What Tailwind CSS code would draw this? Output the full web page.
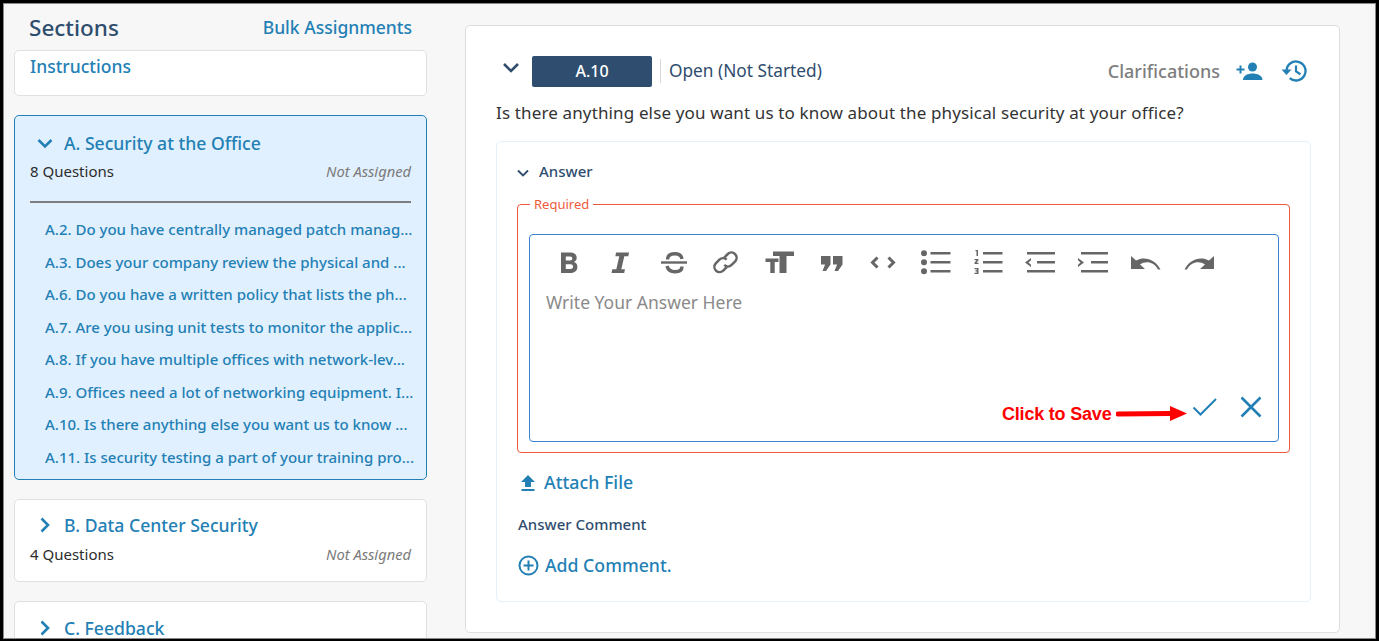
<!DOCTYPE html>
<html>
<head>
<meta charset="utf-8">
<script src="https://cdn.jsdelivr.net/npm/@tailwindcss/browser@4"></script>
</head>
<body class="m-0 bg-black">
<div class="w-[1379px] h-[641px] overflow-hidden bg-black pt-[3px] pl-[3px] pb-[2px] pr-[3px] font-['Noto_Sans',sans-serif]">
<div class="h-full w-full overflow-hidden bg-[#f7f7f7] border border-[#8a8a8a] flex items-start">

  <!-- sidebar -->
  <aside class="w-[423px] ml-[10px] shrink-0 flex flex-col">
    <div class="h-[46px] flex items-start justify-between pl-[15px] pr-[25px]">
      <h2 class="text-[22.5px] leading-[30px] mt-[9px] font-medium text-[#2f4d6e]">Sections</h2>
      <a class="text-[17.5px] leading-[24px] mt-[11px] font-medium text-[#2380b5]">Bulk Assignments</a>
    </div>
    <div class="flex flex-col gap-[19px] w-[413px]">
      <div class="h-[46px] bg-white border border-[#e0e0e0] rounded-[5px] px-[15px] pt-[2px]">
        <a class="block text-[17.5px] leading-[26px] font-medium text-[#2380b5]">Instructions</a>
      </div>

      <div class="h-[365px] bg-[#e1f0fe] border border-[#2380b5] rounded-[5px] px-[15px] pt-[13px]">
        <div class="flex items-center h-[28px] pl-[7px] gap-[11px]">
          <svg class="w-[16px] h-[16px]" viewBox="0 0 16 16" fill="none" stroke="#2380b5" stroke-width="2.6"><path d="M1.5 5l6.5 6.5L14.500 5"/></svg>
          <span class="text-[17.6px] leading-[28px] font-medium text-[#2380b5]">A. Security at the Office</span>
        </div>
        <div class="flex items-center justify-between h-[22px] mt-[3px]">
          <span class="text-[15px] text-[#2c2c2c]">8 Questions</span>
          <span class="text-[14.7px] italic text-[#7b7b7b]">Not Assigned</span>
        </div>
        <div class="h-[2px] bg-[#7d7d7d] mt-[19px]"></div>
        <ul class="mt-[10px] pl-[15px] text-[15px] leading-[32.5px] font-medium text-[#2380b5] whitespace-nowrap">
          <li>A.2. Do you have centrally managed patch manag...</li>
          <li>A.3. Does your company review the physical and ...</li>
          <li>A.6. Do you have a written policy that lists the ph...</li>
          <li>A.7. Are you using unit tests to monitor the applic...</li>
          <li>A.8. If you have multiple offices with network-lev...</li>
          <li>A.9. Offices need a lot of networking equipment. I...</li>
          <li>A.10. Is there anything else you want us to know ...</li>
          <li>A.11. Is security testing a part of your training pro...</li>
        </ul>
      </div>

      <div class="h-[83px] bg-white border border-[#e0e0e0] rounded-[5px] px-[15px] pt-[11px]">
        <div class="flex items-center h-[28px] pl-[7px] gap-[11px]">
          <svg class="w-[16px] h-[16px]" viewBox="0 0 16 16" fill="none" stroke="#2380b5" stroke-width="2.6"><path d="M4.500 1.500L11 8 4.500 14.500"/></svg>
          <span class="text-[17.6px] leading-[28px] font-medium text-[#2380b5]">B. Data Center Security</span>
        </div>
        <div class="flex items-center justify-between h-[22px] mt-[4px]">
          <span class="text-[15px] text-[#2c2c2c]">4 Questions</span>
          <span class="text-[14.7px] italic text-[#7b7b7b]">Not Assigned</span>
        </div>
      </div>

      <div class="h-[83px] bg-white border border-[#e0e0e0] rounded-[5px] px-[15px] pt-[12px]">
        <div class="flex items-center h-[28px] pl-[7px] gap-[11px]">
          <svg class="w-[16px] h-[16px]" viewBox="0 0 16 16" fill="none" stroke="#2380b5" stroke-width="2.6"><path d="M4.500 1.500L11 8 4.500 14.500"/></svg>
          <span class="text-[17.6px] leading-[28px] font-medium text-[#2380b5]">C. Feedback</span>
        </div>
      </div>
    </div>
  </aside>

  <!-- main card -->
  <main class="ml-[28px] mt-[21px] w-[875px] h-[608px] shrink-0 bg-white border border-[#dedede] rounded-[5px] pl-[30px] pr-[28px]">
    <div class="flex items-center h-[32px] mt-[29px]">
      <svg class="w-[18px] h-[12px] -mt-[6px] ml-[6px]" viewBox="0 0 18 12" fill="none" stroke="#2f4d6e" stroke-width="2.6"><path d="M2 2l7 7 7-7"/></svg>
      <div class="ml-[12px] w-[120px] h-[31px] rounded-[2px] bg-[#2f4d6e] text-white text-[16px] font-medium flex items-center justify-center">A.10</div>
      <div class="ml-[8px] w-px h-[24px] bg-[#d8d8d8]"></div>
      <span class="ml-[8px] text-[17.3px] text-[#2f4d6e]">Open (Not Started)</span>
      <span class="ml-auto mt-[1px] text-[18px] font-medium text-[#7e7e7e]">Clarifications</span>
      <svg class="ml-[16px] w-[27px] h-[20px]" viewBox="0 0 27 20" fill="#2380b5"><circle cx="16.500" cy="6" r="4.500"/><path d="M7 19c0-4.500 5-6.500 9.500-6.500S26.500 14.500 26.500 19z"/><path d="M3.500 4.500h2v3h3v2h-3v3h-2v-3H.5v-2h3z"/></svg>
      <svg class="ml-[18px] mr-[4px] w-[26px] h-[24px]" viewBox="0 0 26 24" fill="none" stroke="#2380b5"><path stroke-width="2.300" d="M5.500 12a9.500 9.500 0 1 1 3.200 7.100"/><path fill="#2380b5" stroke="none" d="M0.500 10.500h10L5.500 16z"/><path stroke-width="2.200" d="M15 6.500v6l4.500 2.700"/></svg>
    </div>
    <p class="mt-[13px] text-[17px] leading-[26px] tracking-[0.14px] text-[#333]">Is there anything else you want us to know about the physical security at your office?</p>

    <section class="mt-[15px] w-[815px] h-[461px] border border-[#e5f0fa] rounded-[5px] pl-[20px] pr-[20px]">
      <div class="flex items-center h-[26px] mt-[16px]">
        <svg class="w-[12px] h-[8px] mt-[3px]" viewBox="0 0 12 8" fill="none" stroke="#2f4d6e" stroke-width="1.900"><path d="M1 1.500l5 5 5-5"/></svg>
        <span class="ml-[10px] text-[15px] font-medium text-[#2f4d6e]">Answer</span>
      </div>
      <fieldset class="mt-[12px] w-[773px] h-[257px] border border-[#f05a3c] rounded-[4px] pl-[11px] pr-[10px] pb-[10px]">
        <legend class="ml-[1px] px-[4px] text-[13px] leading-[16px] font-normal text-[#f05a3c]">Required</legend>
        <div class="mt-[22px] h-[208px] border border-[#3b82cf] rounded-[4px] relative">
          <div class="flex items-center gap-[16.400px] pt-[15px] pl-[21px] text-[#666]">
            <svg class="w-[36px] h-[26px]" viewBox="0 0 36 26" fill="#666"><path fill-rule="evenodd" d="M10 2.500h9.500c4 0 6.200 2.200 6.200 5.300 0 2-1 3.500-2.700 4.300 2.200.7 3.400 2.500 3.400 4.900 0 3.600-2.700 6-7 6H10zM14.800 6.500v4h4.200c1.500 0 2.300-.8 2.300-2s-.8-2-2.300-2zM14.800 14.200v4.800h4.800c1.700 0 2.500-1 2.500-2.400s-.8-2.400-2.500-2.400z"/></svg>
            <svg class="w-[36px] h-[26px]" viewBox="0 0 36 26" fill="#666"><path d="M13 2.500h13l-.7 3.800h-4l-3 13h3.700l-.8 3.700H8.500l.8-3.700h4l3-13h-3.900z"/></svg>
            <svg class="w-[36px] h-[26px]" viewBox="0 0 36 26" fill="none" stroke="#666"><path stroke-width="2.400" d="M5 12.500h26"/><path stroke-width="3.400" d="M26 9C25.500 5.500 23 3.800 19 3.800 14 3.800 11.500 5.500 11.500 9.500"/><path stroke-width="3.400" d="M11 16C12 20 14.500 21.700 19 21.700 23.500 21.700 26 20 26 16.500"/></svg>
            <svg class="w-[36px] h-[26px]" viewBox="0 0 36 26" fill="none" stroke="#666" stroke-width="2.500"><g transform="translate(-0.500 -0.700)"><path d="M16.500 8.500l3.800-3.800a5.200 5.200 0 0 1 7.400 7.300l-3.600 3.600a5.200 5.200 0 0 1-7.300 0"/><path d="M19.500 17.500l-3.800 3.800a5.200 5.200 0 0 1-7.400-7.300l3.600-3.600a5.200 5.200 0 0 1 7.300 0"/></g></svg>
            <svg class="w-[36px] h-[26px]" viewBox="0 0 36 26" fill="#666"><path d="M12 1.500h21v4.500h-7.500v17h-7V6H12zM4.500 8.500h13v3.500h-3.800V23H9.300V12H4.500z"/></svg>
            <svg class="w-[36px] h-[26px]" viewBox="0 0 36 26" fill="#666"><path d="M8 6h9.500v8.500L13 21H9.500l2.600-6.500H8zM20 6h9.500v8.500L25 21h-3.500l2.600-6.500H20z"/></svg>
            <svg class="w-[36px] h-[26px]" viewBox="0 0 36 26" fill="none" stroke="#666" stroke-width="3"><path d="M12.500 7.500l-5 5 5 5M23.500 7.500l5 5-5 5"/></svg>
            <svg class="w-[36px] h-[26px]" viewBox="0 0 36 26" fill="#666"><circle cx="6" cy="3.250" r="3"/><circle cx="6" cy="12.250" r="3"/><circle cx="6" cy="21.250" r="3"/><path d="M12.500 2h20v2.500h-20zM12.500 11h20v2.500h-20zM12.500 20h20v2.500h-20z"/></svg>
            <svg class="w-[36px] h-[26px]" viewBox="0 0 36 26"><g fill="#666"><path d="M13 2h19.500v2.500H13zM13 11h19.500v2.500H13zM13 20h19.500v2.500H13z"/><path d="M5.500 0H8v6H6.500V1.300h-1zM4.500 9h4v1.300l-2 2.500h2V14h-4v-1.200l2-2.500h-2zM4.500 18h4v6h-4v-1.200h2.300v-1.300H5.500v-1.200h1.300v-1.100H4.500z"/></g></svg>
            <svg class="w-[36px] h-[26px]" viewBox="0 0 36 26" fill="#666"><path d="M4 2h28v2.500H4zM14 11h18v2.500H14zM4 20h28v2.500H4zM8 8v2.300l-2.500 2.200L8 14.700V17l-6-4.500z"/></svg>
            <svg class="w-[36px] h-[26px]" viewBox="0 0 36 26" fill="#666"><path d="M6 2h27v2.500H6zM16 11h17v2.500H16zM6 20h27v2.500H6zM3 8v2.300l2.500 2.200L3 14.700V17l6-4.500z"/></svg>
            <svg class="w-[36px] h-[26px]" viewBox="0 0 36 26" fill="#666"><path d="M4 6V19H18L13 14.500C19 10.500 27 12 31 19.500H33.500C29 10 18 5.500 9 10.500z"/></svg>
            <svg class="w-[36px] h-[26px]" viewBox="0 0 36 26" fill="#666"><path d="M34 6V19H20L25 14.500C19 10.500 11 12 7 19.500H4.500C9 10 20 5.500 29 10.500z"/></svg>
          </div>
          <div class="mt-[14px] pl-[16px] text-[17.5px] leading-[24px] text-[#8a8a8a]">Write Your Answer Here</div>
          <div class="absolute right-[16px] bottom-[23px] flex items-center gap-[23px]">
            <svg class="w-[25px] h-[20px]" viewBox="0 0 25 20" fill="none" stroke="#2380b5" stroke-width="2"><path d="M1.500 10.500l7 7L24 2"/></svg>
            <svg class="w-[22px] h-[22px]" viewBox="0 0 22 22" fill="none" stroke="#2380b5" stroke-width="2.600"><path d="M1.500 1.500l19 19M20.500 1.500l-19 19"/></svg>
          </div>
          <div class="absolute left-[472px] top-[164px] flex items-center">
            <span class="text-[18px] leading-[30px] font-['Liberation_Sans',sans-serif] font-bold tracking-[-0.2px] text-[#ff0000] whitespace-nowrap">Click to Save</span>
            <svg class="ml-[5px] w-[71px] h-[18px]" viewBox="0 0 71 18" fill="#f00"><path d="M2 6.500l52-.4V1L71 8.500 54 16v-4.900L2 11.500a2.500 2.500 0 0 1 0-5z"/></svg>
          </div>
        </div>
      </fieldset>
      <a class="flex items-center mt-[17px] h-[26px] text-[17.8px] font-medium text-[#2380b5]">
        <svg class="w-[16px] h-[18px] ml-[3px]" viewBox="0 0 16 18" fill="#2380b5"><path d="M8 1l7 7h-4v5H5V8H1zM1.500 15h13v2h-13z"/></svg>
        <span class="ml-[8px] -mt-px">Attach File</span>
      </a>
      <div class="mt-[18px] ml-px h-[20px] text-[15px] leading-[20px] font-medium text-[#2f4d6e]">Answer Comment</div>
      <a class="flex items-center mt-[18px] h-[26px] text-[17.7px] font-medium text-[#2380b5]">
        <svg class="w-[21px] h-[21px] ml-[1px]" viewBox="0 0 21 21" fill="none" stroke="#2380b5" stroke-width="2"><circle cx="10.500" cy="10.500" r="9"/><path d="M10.500 5.500v10M5.500 10.500h10"/></svg>
        <span class="ml-[6px]">Add Comment.</span>
      </a>
    </section>
  </main>
</div>
</div>
</body>
</html>
